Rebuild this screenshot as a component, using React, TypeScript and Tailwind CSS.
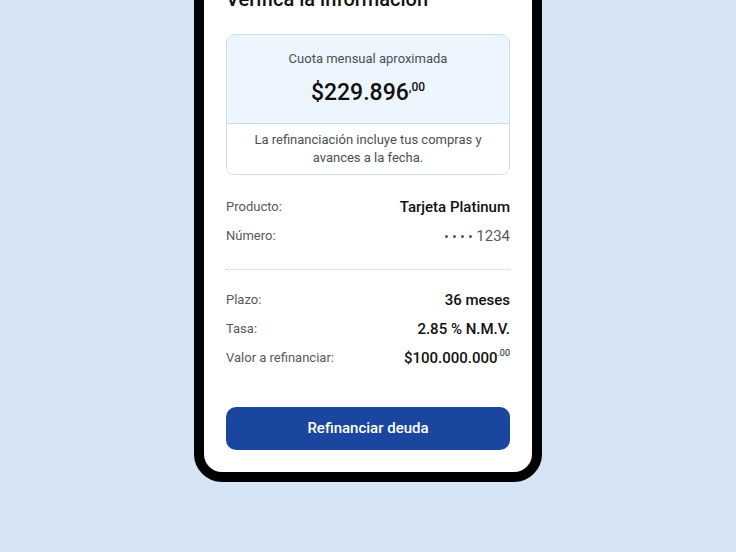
import React from "react";

function Row({ label, children }: { label: string; children: React.ReactNode }) {
  return (
    <div className="flex items-center justify-between h-[20px]">
      <span className="text-[13px] text-[#555a60]">{label}</span>
      {children}
    </div>
  );
}

export default function App() {
  return (
    <div
      className="w-[736px] h-[552px] overflow-hidden bg-[#d5e5f6] flex justify-center"
      style={{ fontFamily: "Roboto, 'Liberation Sans', sans-serif" }}
    >
      <div className="mt-[-60px] w-[348px] h-[542px] border-[10px] border-black rounded-[28px] bg-white overflow-hidden flex flex-col">
        <div className="flex flex-col px-[22px] pt-[35px] pb-[22px] flex-1">
          <h1 className="text-[20px] leading-[28px] font-medium text-[#111]">Verifica la información</h1>
          <div className="mt-[21px] border border-[#cddcf0] rounded-[8px] overflow-hidden">
            <div className="bg-[#edf5fe] flex flex-col items-center pt-[15px] pb-[15px]">
              <div className="text-[13px] leading-[18px] text-[#4a4f55]">Cuota mensual aproximada</div>
              <div className="mt-[10px] h-[30px] flex items-start text-[#111]">
                <span className="text-[23px] leading-[30px] font-medium">$229.896</span>
                <span className="text-[12px] leading-[16px] font-medium mt-[1px]">,00</span>
              </div>
            </div>
            <div className="border-t border-[#cddcf0] bg-white px-4 py-[7px] text-center text-[13px] leading-[18px] text-[#4a4f55]">
              La refinanciación incluye tus compras y<br />avances a la fecha.
            </div>
          </div>

          <div className="mt-[22px] flex flex-col gap-[9px]">
            <Row label="Producto:">
              <span className="text-[15px] font-medium text-[#111]">Tarjeta Platinum</span>
            </Row>
            <Row label="Número:">
              <span className="text-[15px] text-[#555a60] flex items-center">
                <span className="flex items-center gap-[5px] mr-[4px]">
                  <span className="w-[3px] h-[3px] rounded-full bg-[#555a60]" />
                  <span className="w-[3px] h-[3px] rounded-full bg-[#555a60]" />
                  <span className="w-[3px] h-[3px] rounded-full bg-[#555a60]" />
                  <span className="w-[3px] h-[3px] rounded-full bg-[#555a60]" />
                </span>
                1234
              </span>
            </Row>
          </div>

          <div className="mt-[23px] border-t border-dotted border-[#c9cdd3]" />

          <div className="mt-[20px] flex flex-col gap-[9px]">
            <Row label="Plazo:">
              <span className="text-[15px] font-medium text-[#111]">36 meses</span>
            </Row>
            <Row label="Tasa:">
              <span className="text-[15px] font-medium text-[#111]">2.85 % N.M.V.</span>
            </Row>
            <Row label="Valor a refinanciar:">
              <span className="flex items-start text-[#111]">
                <span className="text-[15px] font-medium leading-[20px]">$100.000.000</span>
                <span className="text-[9px] leading-[12px] mt-[-1px]">.00</span>
              </span>
            </Row>
          </div>

          <button className="mt-[39px] h-[43px] w-full rounded-[10px] bg-[#1a46a0] text-white text-[15px] font-medium">
            Refinanciar deuda
          </button>
        </div>
      </div>
    </div>
  );
}
